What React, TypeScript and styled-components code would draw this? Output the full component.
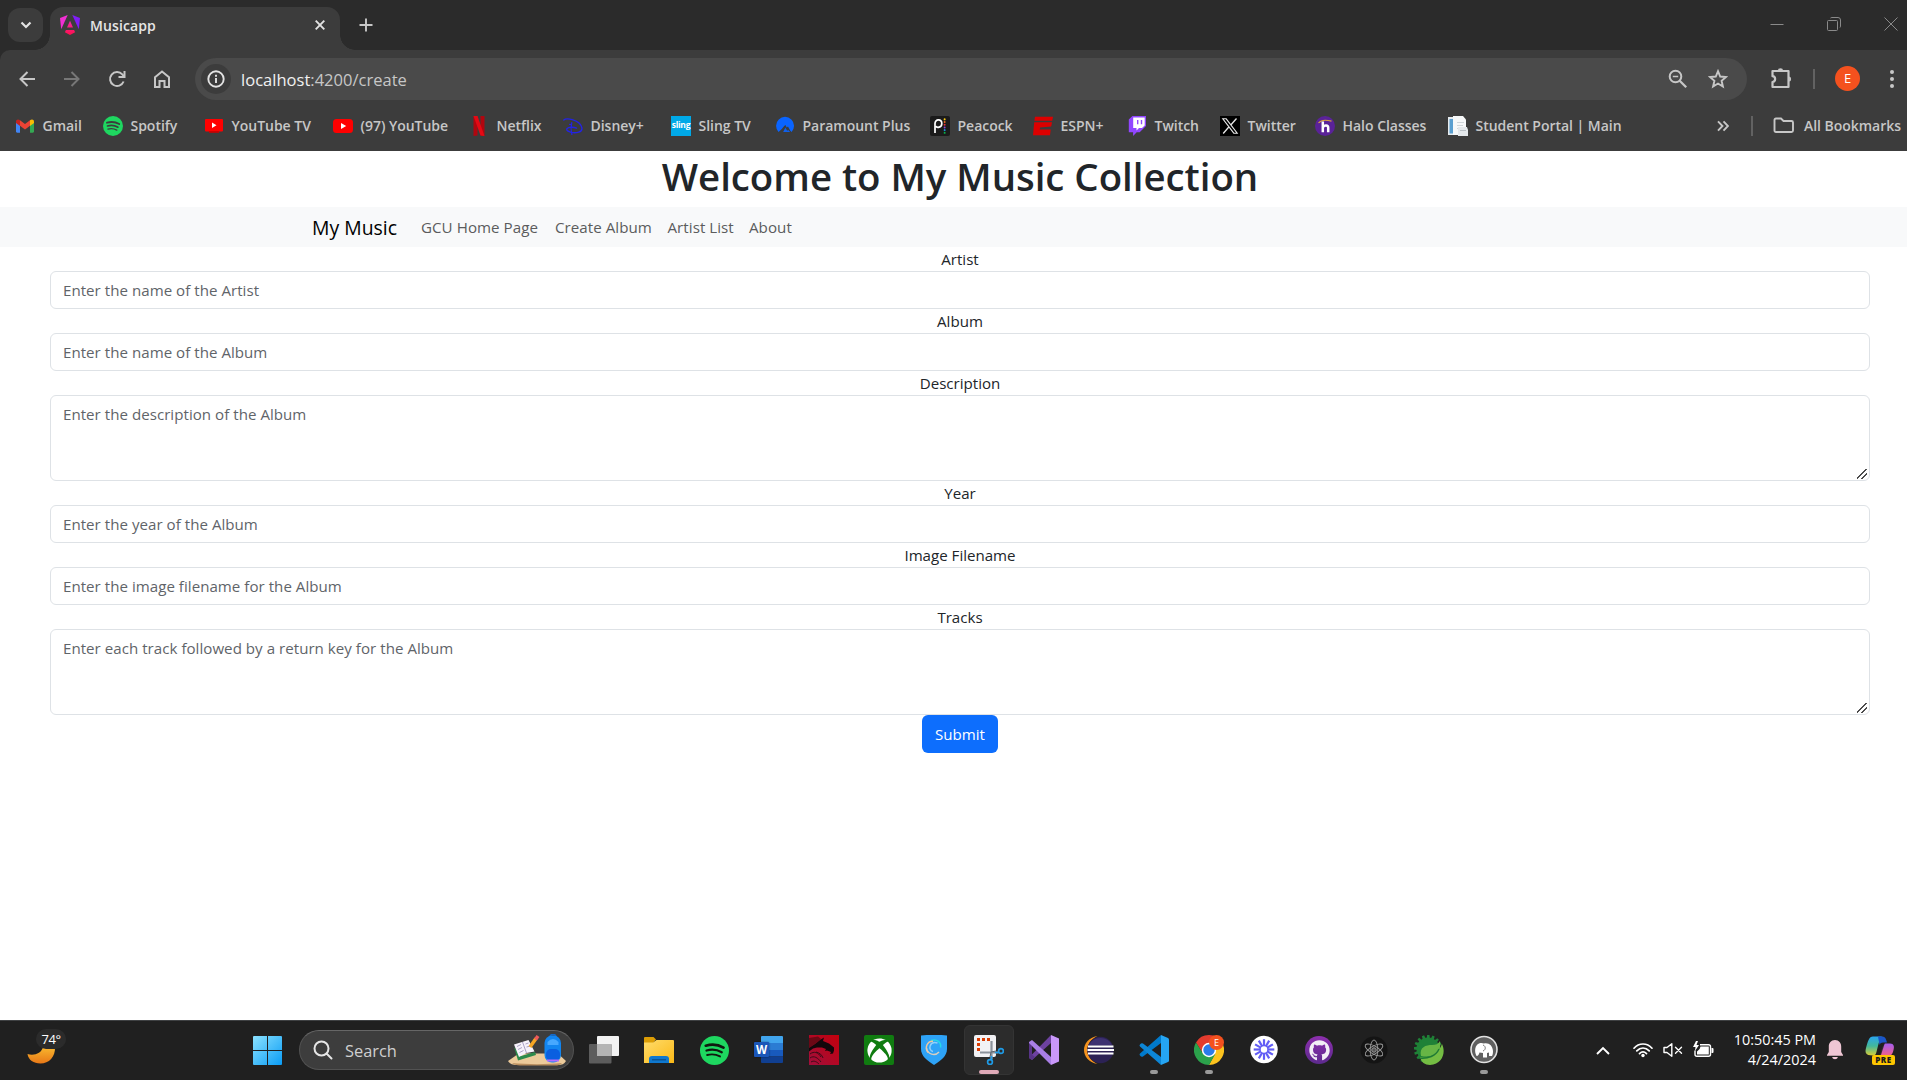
import React from "react";
import styled, { createGlobalStyle } from "styled-components";
import { FaXbox, FaGithub } from "react-icons/fa";

const GlobalStyle = createGlobalStyle`
  * { box-sizing: border-box; }
  body { margin: 0; background: #fff; overflow: hidden; }
  svg { display: block; flex: none; }
`;

const FONT = `"Open Sans", "Noto Sans", sans-serif`;

const Screen = styled.div`
  width: 1907px;
  height: 1080px;
  overflow: hidden;
  display: flex;
  flex-direction: column;
  background: #fff;
  font-family: ${FONT};
`;

/* ---------- Browser chrome ---------- */

const TabStrip = styled.div`
  height: 50px;
  flex: none;
  display: flex;
  align-items: flex-start;
  background: #2b2b2b;
  padding: 7px 0 0 8px;
`;

const TabSearch = styled.div`
  width: 35px;
  height: 34px;
  margin-top: 1px;
  border-radius: 12px;
  background: #3c3c3c;
  display: flex;
  align-items: center;
  justify-content: center;
`;

const Tab = styled.div`
  position: relative;
  width: 290px;
  height: 43px;
  margin-left: 7px;
  padding: 0 15px 7px 10px;
  border-radius: 13px 13px 0 0;
  background: #3c3c3c;
  display: flex;
  align-items: center;
  &::before,
  &::after {
    content: "";
    position: absolute;
    bottom: 0;
    width: 15px;
    height: 15px;
  }
  &::before {
    left: -15px;
    background: radial-gradient(circle at 0 0, transparent 14.5px, #3c3c3c 15px);
  }
  &::after {
    right: -15px;
    background: radial-gradient(circle at 100% 0, transparent 14.5px, #3c3c3c 15px);
  }
`;

const TabTitle = styled.span`
  flex: 1;
  margin-left: 10px;
  padding-top: 1px;
  font-size: 14px;
  font-weight: 600;
  letter-spacing: 0.1px;
  color: #e6e6e6;
`;

const NewTab = styled.div`
  width: 14px;
  margin: 11px 0 0 18.5px;
`;

const WindowControls = styled.div`
  margin-left: auto;
  padding: 10px 9px 0 0;
  display: flex;
  gap: 43px;
`;

const Toolbar = styled.div`
  height: 58px;
  flex: none;
  display: flex;
  align-items: center;
  background: #3c3c3c;
  border-radius: 10px 0 0 0;
  padding-left: 4.5px;
`;

const ToolbarBack = styled.div`
  background: #2b2b2b;
  flex: none;
`;

const NavButton = styled.div`
  width: 45px;
  height: 42px;
  display: flex;
  align-items: center;
  justify-content: center;
`;

const Omnibox = styled.div`
  width: 1552px;
  height: 42px;
  margin-left: 10.5px;
  padding: 0 19px 0 6px;
  border-radius: 21px;
  background: #4a4a4a;
  display: flex;
  align-items: center;
`;

const SiteInfo = styled.div`
  width: 30px;
  height: 30px;
  border-radius: 50%;
  background: #3c3c3c;
  display: flex;
  align-items: center;
  justify-content: center;
`;

const Url = styled.span`
  flex: 1;
  margin-left: 10px;
  font-size: 16.5px;
  letter-spacing: 0.02px;
  color: #c7c7c7;
  b {
    font-weight: 400;
    color: #f1f1f1;
  }
`;

const OmniActions = styled.div`
  display: flex;
  gap: 20px;
`;

const ToolbarRight = styled.div`
  flex: 1;
  display: flex;
  align-items: center;
  padding-left: 23px;
`;

const Divider = styled.div<{ $color: string }>`
  width: 2px;
  height: 20px;
  flex: none;
  background: ${(p) => p.$color};
`;

const ToolbarDivider = styled(Divider)`
  margin-left: 21px;
`;

const Avatar = styled.div`
  width: 25px;
  height: 25px;
  margin: -1px 29px 0 20px;
  border-radius: 50%;
  background: #f4511e;
  color: #fff;
  font-size: 13px;
  line-height: 25px;
  text-align: center;
`;

const Bookmarks = styled.div`
  height: 43px;
  flex: none;
  display: flex;
  align-items: center;
  padding: 0 0 7px 15px;
  background: #3c3c3c;
  color: #c7c7c7;
`;

const Bookmark = styled.div<{ $w: number }>`
  width: ${(p) => p.$w}px;
  flex: none;
  display: flex;
  align-items: center;
  gap: 7.5px;
  font-size: 14px;
  line-height: 20px;
  font-weight: 600;
  letter-spacing: -0.02px;
  white-space: nowrap;
`;

const Overflow = styled.div`
  margin: 0 22px 0 auto;
`;

const AllBookmarks = styled.div`
  display: flex;
  align-items: center;
  gap: 10px;
  width: 134px;
  margin: -1px 0 0 20px;
  font-size: 14px;
  font-weight: 600;
  letter-spacing: -0.03px;
  white-space: nowrap;
`;

/* ---------- Page ---------- */

const Page = styled.main`
  width: 1920px;
  height: 869px;
  flex: none;
  background: #fff;
  color: #212529;
`;

const Heading = styled.h1`
  margin: 0;
  height: 56px;
  padding-top: 1px;
  font-size: 38.4px;
  line-height: 48px;
  font-weight: 570;
  letter-spacing: -0.02px;
  text-align: center;
`;

const Navbar = styled.nav`
  height: 40px;
  padding: 0 312px;
  background: #f8f9fa;
  display: flex;
  align-items: center;
`;

const Brand = styled.a`
  margin-right: 16px;
  width: 85px;
  font-size: 19.4px;
  color: #000;
  white-space: nowrap;
`;

const NavLink = styled.a<{ $w: number }>`
  width: ${(p) => p.$w}px;
  padding: 0 8px;
  font-size: 15.15px;
  line-height: 24px;
  letter-spacing: 0.04px;
  color: #5b5c5d;
  white-space: nowrap;
`;

const Form = styled.form`
  padding: 0 50px;
  display: flex;
  flex-direction: column;
  align-items: center;
`;

const Label = styled.label`
  font-size: 15.1px;
  line-height: 24px;
`;

const fieldStyle = `
  display: block;
  width: 100%;
  margin: 0;
  padding: 6px 12px;
  border: 1px solid #dee2e6;
  border-radius: 6px;
  background: #fff;
  font-family: ${FONT};
  font-size: 15.1px;
  line-height: 24px;
  letter-spacing: 0.03px;
  outline: none;
  &::placeholder { color: #5f6469; opacity: 1; }
`;

const Input = styled.input`
  ${fieldStyle}
  height: 38px;
`;

const TextArea = styled.textarea`
  ${fieldStyle}
  height: 86px;
  resize: vertical;
  &::-webkit-resizer {
    background: linear-gradient(
        135deg,
        transparent 42%,
        #4c4c4c 44%,
        #4c4c4c 52%,
        transparent 54%,
        transparent 67%,
        #4c4c4c 69%,
        #4c4c4c 77%,
        transparent 79%
      )
      3px 4px / 10px 10px no-repeat;
  }
`;

const Submit = styled.button`
  width: 76px;
  height: 38px;
  padding: 0;
  border: 0;
  border-radius: 6px;
  background: #0d6efd;
  color: #fff;
  font-family: ${FONT};
  font-size: 15.1px;
  line-height: 24px;
`;

/* ---------- Taskbar ---------- */

const Taskbar = styled.footer`
  height: 60px;
  flex: none;
  display: flex;
  align-items: center;
  padding-bottom: 1px;
  background: #202020;
  border-top: 1px solid #3f4143;
  color: #fff;
`;

const Weather = styled.div`
  position: relative;
  width: 253px;
  height: 58px;
  padding: 26px 0 0 27px;
`;

const Temperature = styled.span`
  position: absolute;
  left: 36px;
  top: 8px;
  width: 30px;
  height: 20px;
  border-radius: 10px;
  background: #2b2b2b;
  font-size: 13px;
  line-height: 20px;
  letter-spacing: -0.4px;
  text-align: center;
`;

const SearchBox = styled.div`
  width: 275px;
  height: 40px;
  margin-left: 17px;
  padding: 0 7px 0 13px;
  border: 1px solid #525252;
  border-top-color: #666;
  border-radius: 20px;
  background: #3d3d3d;
  display: flex;
  align-items: center;
`;

const SearchText = styled.span`
  flex: 1;
  margin-left: 12px;
  padding-top: 1px;
  font-size: 16.4px;
  line-height: 24px;
  color: #cfcfcf;
`;

const Apps = styled.div`
  margin-left: 5px;
  display: flex;
  gap: 5px;
`;

const AppTile = styled.div<{ $active?: boolean; $dot?: string }>`
  position: relative;
  width: 50px;
  height: 50px;
  border-radius: 6px;
  border: 1px solid ${(p) => (p.$active ? "#343434" : "transparent")};
  background: ${(p) => (p.$active ? "#2c2c2c" : "transparent")};
  display: flex;
  align-items: center;
  justify-content: center;
  &::after {
    content: "";
    display: ${(p) => (p.$dot ? "block" : "none")};
    position: absolute;
    bottom: 0;
    width: ${(p) => (p.$active ? 20 : 8)}px;
    height: 4px;
    border-radius: 2px;
    background: ${(p) => p.$dot};
  }
`;

const Tray = styled.div`
  flex: 1;
  display: flex;
  align-items: center;
  padding-left: 87px;
`;

const TrayStatus = styled.div`
  display: flex;
  align-items: center;
  gap: 10px;
  margin-left: 23px;
`;

const Clock = styled.div`
  width: 102px;
  margin: -1px 11px 0 0;
  display: flex;
  flex-direction: column;
  align-items: flex-end;
  font-size: 14.4px;
  line-height: 20px;
  white-space: nowrap;
`;

/* ---------- Icons ---------- */

type LineProps = { d: string; w: number; h: number; c?: string; s?: number };
const Line = ({ d, w, h, c = "#c7c7c7", s = 2 }: LineProps) => (
  <svg width={w} height={h} viewBox={`0 0 ${w} ${h}`} fill="none" stroke={c} strokeWidth={s}>
    <path d={d} />
  </svg>
);

const AngularIcon = () => (
  <svg width="20" height="20" viewBox="0 0 20 20">
    <defs>
      <linearGradient id="ng2" x1="0" y1="0" x2="0" y2="1">
        <stop offset="0" stopColor="#ee2aa8" />
        <stop offset="1" stopColor="#ff0f4c" />
      </linearGradient>
    </defs>
    <path fill="#f02fd2" d="M7.7 0 0 3.1l1.2 11.2L7.7 0Z" />
    <path fill="#7f1df5" d="M12.3 0 20 3.1l-1.2 11.2L12.3 0Z" />
    <path fill="url(#ng2)" d="M10 5.8 13 12.6H7L10 5.8ZM5.9 15h8.2l1 2.2L10 20l-5.1-2.8 1-2.2Z" />
  </svg>
);

const GmailIcon = () => (
  <svg width="20" height="20" viewBox="0 0 20 20">
    <path fill="#4285f4" d="M1 5.5 5 8.6v8.1H2.2c-.7 0-1.2-.5-1.2-1.2Z" />
    <path fill="#34a853" d="M15 8.6l4-3.1v10c0 .7-.5 1.2-1.2 1.2H15Z" />
    <path fill="#fbbc04" d="M15 4.3c1.8-1.7 4-.8 4 1.3v1.3l-4 3Z" />
    <path fill="#ea4335" d="M5 4.3l5 3.8 5-3.8v5.4l-5 3.8-5-3.8Z" />
    <path fill="#c5221f" d="M1 5.6C1 3.5 3.2 2.6 5 4.3v5.6l-4-3Z" />
  </svg>
);

const SpotifyDisc = ({ size, ink }: { size: number; ink: string }) => (
  <svg width={size} height={size} viewBox="0 0 20 20" fill="none" stroke={ink} strokeLinecap="round">
    <circle cx="10" cy="10" r="10" fill="#1ed760" stroke="none" />
    <path d="M4 6.7c4-1.1 8.500-.8 12.200 1.300" strokeWidth="1.9" />
    <path d="M4.500 10c3.500-1 7.300-.6 10.500 1.200" strokeWidth="1.6" />
    <path d="M4.900 13.100c3-.8 6.200-.5 8.900 1" strokeWidth="1.3" />
  </svg>
);

const YouTubeTvIcon = () => (
  <svg width="20" height="20" viewBox="0 0 20 20">
    <rect x="1" y="3" width="18" height="12.5" rx="1" fill="#f00" />
    <rect x="5" y="15" width="10" height="1.8" fill="#c00" />
    <path fill="#fff" d="M8 6.500v5.400l4.500-2.700Z" />
  </svg>
);

const YouTubeIcon = () => (
  <svg width="20" height="20" viewBox="0 0 20 20">
    <rect x="0" y="3" width="20" height="14" rx="3.5" fill="#f00" />
    <path fill="#fff" d="M8 7v6l5.200-3Z" />
  </svg>
);

const NetflixIcon = () => (
  <svg width="20" height="20" viewBox="0 0 20 20">
    <path fill="#b1060f" d="M4.500 0h4v19.500l-4 .5ZM11.500 0h4v20l-4-.5Z" />
    <path fill="#e50914" d="M4.500 0h4l7 20-4-.5Z" />
  </svg>
);

const DisneyIcon = () => (
  <svg width="20" height="20" viewBox="0 0 20 20" fill="none" stroke="#2323e6" strokeLinecap="round">
    <path d="M.8 4C3 1.800 17 3 18.900 12c.6 4-5.500 5.600-10.500 4.400-3-.8-5.400-2-4.400-3.700 1.400-2 7-1.700 9.500-.6" strokeWidth="1.4" />
    <path d="M8.800 6.500c-.8 3-.7 9 .1 12M6.500 8.300l2 .4" strokeWidth="1.2" />
  </svg>
);

const SlingLogo = styled.span`
  width: 20px;
  height: 20px;
  background: #00a9e8;
  color: #fff;
  font-size: 8.5px;
  font-weight: 700;
  line-height: 18px;
  letter-spacing: -0.3px;
  text-align: center;
`;

const ParamountIcon = () => (
  <svg width="20" height="20" viewBox="0 0 20 20">
    <path fill="#0a64ff" d="M3.500 16A9 9 0 1 1 16.600 16l-1.300-1.300-2.300-4.200-1.300 1L10.500 9 9.200 10 6.800 13Z" />
    <path fill="#0a64ff" d="M10.300 11.500 8.200 16h7l-2-2-1 .7Z" opacity=".9" />
  </svg>
);

const PeacockIcon = () => (
  <svg width="20" height="20" viewBox="0 0 20 20">
    <rect width="20" height="20" rx="2" fill="#1b1b1b" />
    <path d="M5 17V7.500C5 2.500 11.800 3 11.800 7.500S6.500 12 6 10" fill="none" stroke="#fff" strokeWidth="1.7" />
    {["#fccc12", "#f26b21", "#e8303a", "#8b46d8", "#1a8bd8", "#08b14b"].map((c, i) => (
      <rect key={c} x="13.7" y={2.3 + i * 2.7} width="1.9" height="2" rx=".9" fill={c} />
    ))}
  </svg>
);

const EspnIcon = () => (
  <svg width="20" height="20" viewBox="0 0 20 20">
    <path fill="#d00" d="M2 .8h18l-.8 4H1.400ZM1.200 6.200H19l-.8 4.400-11.100.8-.4 2.100H17.700L17 19.200H0Z" />
  </svg>
);

const TwitchIcon = () => (
  <svg width="20" height="20" viewBox="0 0 20 20">
    <path fill="#9146ff" d="M5.400 0 1.800 3.600v12.600h4.300V20l3.600-3.700h3L19 10V0Z" />
    <path fill="#fff" d="M6.200 1.400h11.500v8L15 12h-3l-2.500 2.400V12H6.200Z" />
    <path fill="#9146ff" d="M10 4h1.400v4.200H10ZM13.800 4h1.400v4.200h-1.400Z" />
  </svg>
);

const XIcon = () => (
  <svg width="20" height="20" viewBox="0 0 20 20">
    <rect width="20" height="20" fill="#000" />
    <path d="M2.800 2.800h3.400l11 14.400h-3.400Z" fill="none" stroke="#e8e8e8" strokeWidth="1.1" />
    <path d="M16.500 2.500 11 8.800M8.800 11 3.200 17.500" stroke="#e8e8e8" strokeWidth="1.3" />
  </svg>
);

const HaloIcon = () => (
  <svg width="20" height="20" viewBox="0 0 20 20" fill="none">
    <circle cx="10" cy="10" r="10" fill="#5a2299" />
    <path d="M3.500 7C6 3.800 12 4 16.500 5.200" stroke="#d9a441" strokeWidth="1.2" />
    <path d="M7.800 5.500v10.700M8 11c1.500-2.200 5.200-2 5.200.6v4.600" stroke="#fff" strokeWidth="2.5" />
  </svg>
);

const PortalIcon = () => (
  <svg width="20" height="20" viewBox="0 0 20 20">
    <path fill="#e6ebee" d="M0 1h6v18H0Z" />
    <path fill="#5a9fd0" d="M1.500 3h3.500v14.500H1.500Z" />
    <path fill="#f6f8f9" d="M5 0h10l3 3.500V19H5Z" />
    <path fill="#cfd5d9" d="M9 6h7v1H9ZM9 9h6v1H9ZM9 12h3v1H9Z" />
    <path fill="#e4e8eb" d="M10 11h9l1 3v6H10Z" />
    <path fill="#b9c0c5" d="M12 14h6v1h-6Z" />
  </svg>
);

const SiteInfoIcon = () => (
  <svg width="18" height="18" viewBox="0 0 18 18" fill="none" stroke="#e3e3e3">
    <circle cx="9" cy="9" r="7.7" strokeWidth="1.9" />
    <path d="M9 8v5M9 4.800v1.900" strokeWidth="1.9" />
  </svg>
);

const ReloadIcon = () => (
  <svg width="18" height="18" viewBox="0 0 18 18" fill="none" stroke="#c7c7c7" strokeWidth="2">
    <path d="M15.600 11.500A7 7 0 1 1 14.300 4.300L16 6.300" />
    <path d="M16.500 1v6h-6" />
  </svg>
);

const PuzzleIcon = () => (
  <svg width="22" height="22" viewBox="0 0 22 22" fill="none" stroke="#c7c7c7" strokeWidth="2.2" strokeLinejoin="round">
    <path d="M2.500 3h16v16h-16v-5c3.500-.3 3.500-5.500 0-5.800Z" />
    <path d="M8 2.300a2.500 2 0 0 1 5 0ZM19.100 8.500a2 2.500 0 0 1 0 5Z" fill="#c7c7c7" stroke="none" />
  </svg>
);

const MoonIcon = () => (
  <svg width="29" height="20" viewBox="0 0 29 20">
    <defs>
      <linearGradient id="moon" x1="0" y1="0" x2="0" y2="1">
        <stop offset="0" stopColor="#f8b72e" />
        <stop offset="1" stopColor="#e87817" />
      </linearGradient>
    </defs>
    <path fill="url(#moon)" d="M.5 7C7 9 14.500 6.500 16 0L28 0C28.500 10 22 16.500 13.500 16.500 6.500 16.500 1.500 13 .5 7Z" />
  </svg>
);

const WindowsIcon = () => (
  <svg width="29" height="29" viewBox="0 0 29 29">
    <defs>
      <linearGradient id="win" x1="0" y1="0" x2="29" y2="29" gradientUnits="userSpaceOnUse">
        <stop offset="0" stopColor="#8be2ff" />
        <stop offset="1" stopColor="#0a9cf5" />
      </linearGradient>
    </defs>
    <path fill="url(#win)" d="M1 0h13v14H0V1Q0 0 1 0ZM15 0h13q1 0 1 1v13H15ZM0 15h14v14H1q-1 0-1-1ZM15 15h14v13q0 1-1 1H15Z" />
  </svg>
);

const SearchArt = () => (
  <svg width="58" height="32" viewBox="0 0 58 32">
    <path fill="#ecca9a" d="M0 27 8 21.500l4-2h36l4 2 6 5.500c-2 3-4 4-8 4H9c-4 0-7-1-9-4Z" />
    <path fill="#b98e5e" d="M4 29c14 1.500 36 1.500 50 0-2 2-4 2.500-7 2.500H12c-3 0-6-1-8-2.500Z" />
    <path fill="#2c8a4b" d="m6 13 4 13.500 18-5.500-1-3-14 4Z" />
    <path fill="#f6f2fb" d="m6 10.500 8-2.500 6.500-2 6 11.500-8 1.500-7.500 4Z" />
    <path stroke="#aaa0c4" fill="none" d="m14.500 8 4 11M9 12.500l4-2M10 15.500l4-2M17.500 10l3-1M18.500 13l4-1M11.500 18.500l4-2" />
    <path stroke="#f6a623" strokeWidth="3.5" d="m22 13 6-8.500" />
    <path stroke="#ef5a5a" strokeWidth="3.5" d="m27.500 5.500 2.500-3.500" />
    <path fill="none" stroke="#1467c8" strokeWidth="1.5" d="M42 3c0-3.500 6-3.500 6 0" />
    <rect x="36.500" y="1.500" width="16.5" height="27" rx="7.500" fill="#1285f0" />
    <path fill="#47a8ff" d="M39.500 8q5.500-6 11 0v3h-11Z" />
    <rect x="38" y="15" width="14" height="12" rx="5" fill="#0a5fe0" />
    <path stroke="#b56cff" strokeWidth="2" d="M39 26.500h12" />
  </svg>
);

const TaskViewIcon = () => (
  <svg width="30" height="30" viewBox="0 0 30 30">
    <rect x="8" y="1" width="22" height="20" rx="1" fill="#f2f2f2" />
    <rect x="0" y="9" width="22.5" height="19.5" rx="1" fill="#5d5d5d" />
    <path fill="#b4b4b4" d="M8 9h14.500v12H8Z" />
  </svg>
);

const ExplorerIcon = () => (
  <svg width="30" height="30" viewBox="0 0 30 30">
    <defs>
      <linearGradient id="fold" x1="0" y1="0" x2="1" y2="1">
        <stop offset="0" stopColor="#ffdc6b" />
        <stop offset="1" stopColor="#fbb917" />
      </linearGradient>
    </defs>
    <path fill="#dc9d05" d="M0 3q0-1 1-1h8.500L12 4.500 9 8H0Z" />
    <path fill="url(#fold)" d="M0 7.500h9L12.500 5H29q1 0 1 1v22H0Z" />
    <path fill="#0f78cf" d="M5 28v-4q0-3 3-3h14q3 0 3 3v4Z" />
    <path stroke="#0a4b86" strokeWidth="1.2" d="M8 24.800h14" />
  </svg>
);

const WordTile = styled.span`
  position: absolute;
  left: 9px;
  top: 16px;
  width: 15px;
  height: 15px;
  border-radius: 1px;
  background: #1b56b8;
  box-shadow: 0 0 2px rgba(0, 0, 0, 0.5);
  color: #fff;
  font-size: 11.5px;
  font-weight: 700;
  line-height: 15px;
  text-align: center;
`;

const WordIcon = () => (
  <svg width="30" height="30" viewBox="0 0 30 30">
    <path fill="#41a5ee" d="M8 1h20q1 0 1 1v6H7V2q0-1 1-1Z" />
    <path fill="#2b7cd3" d="M7 8h22v7H7Z" />
    <path fill="#185abd" d="M7 15h22v6.500H7Z" />
    <path fill="#103f91" d="M7 21.500h22V27q0 1-1 1H8q-1 0-1-1Z" />
  </svg>
);

const DragonIcon = () => (
  <svg width="30" height="30" viewBox="0 0 30 30">
    <defs>
      <linearGradient id="drg" x1="0" y1="1" x2="1" y2="0">
        <stop offset="0" stopColor="#a00f3c" />
        <stop offset="1" stopColor="#c4000c" />
      </linearGradient>
    </defs>
    <rect width="30" height="30" fill="url(#drg)" />
    <path fill="#5a0912" d="M0 3 9 1.500 12 4 7 8 0 13Z" opacity=".8" />
    <path fill="#14070b" d="M0 13 6 9l5-4 4-2.500-1 3.500 6 2.500 5 4v3l-1 3-3 .500 1-2-4-1.500-2 .5 1-2-4-1.500-5 0-4 1-4 3Z" />
    <path fill="none" stroke="#3c0b18" strokeWidth="1" d="M1 19c4-3 8-2 11 3M1 23c4-3 8 0 11 4M2 27c3-2 6 0 8 2M7 17c4 1 6 3 7 6" />
  </svg>
);

const XboxTile = styled.span`
  width: 30px;
  height: 30px;
  border-radius: 2px;
  background: #107c10;
  color: #fff;
  display: flex;
  align-items: center;
  justify-content: center;
`;

const ShieldIcon = () => (
  <svg width="30" height="30" viewBox="0 0 30 30">
    <path fill="#2ea3f7" d="M2 .5q13-1.500 26 0V14c0 7-6 11.500-13 16C8 25.500 2 21 2 14Z" />
    <g fill="none" strokeWidth="1.5">
      <path stroke="#8fd0fb" d="M18.500 8c-8-2.500-10 7-4.500 8.500" />
      <path stroke="#25dbe8" d="M12 5.500c6-2 10.500 2 9.500 7" />
      <path stroke="#f0c79f" d="M9 17.500C5.500 13 8 6 14 6.200" />
      <path stroke="#d9cfc0" d="M7.500 13c1 6.500 8.500 8.500 12.500 4" />
    </g>
  </svg>
);

const SnipIcon = () => (
  <svg width="30" height="30" viewBox="0 0 30 30">
    <rect width="22" height="22" rx="2" fill="#f1f1f4" />
    <path fill="none" stroke="#d83b01" strokeWidth="3" strokeDasharray="3 2" d="M16 4.500H3" />
    <path fill="none" stroke="#d83b01" strokeWidth="3" strokeDasharray="3 2" d="M4.500 8v9" />
    <path fill="none" stroke="#8b929b" strokeWidth="2.2" d="M6 17.500h18M17.500 6v18" />
    <path fill="none" stroke="#5d6670" strokeWidth="1" d="M17 17l5-1M17 17l-1 5" />
    <circle cx="27" cy="16" r="2.4" fill="none" stroke="#1f9be6" strokeWidth="1.7" />
    <circle cx="16" cy="27" r="2.4" fill="none" stroke="#1f9be6" strokeWidth="1.7" />
    <path stroke="#1f9be6" strokeWidth="1.7" d="M21 17.500h4M17.500 21v4" />
  </svg>
);

const VisualStudioIcon = () => (
  <svg width="30" height="30" viewBox="0 0 30 30">
    <path fill="#6d42a0" d="M3 25 22 8V0L0 22.500V23Z" />
    <path fill="#583487" d="M0 7v16l3 2 3-3-3-2.500v-9Z" />
    <path fill="#a97fe6" d="M3 5 22 22v8L0 8V7Z" />
    <path fill="#c997fa" d="m22 0 8 3.500v23L22 30Z" />
  </svg>
);

const EclipseIcon = () => (
  <svg width="30" height="30" viewBox="0 0 30 30">
    <path fill="#f7941e" d="M13.500 1C-4.500 4-4.500 26 13.500 29 0 23 0 7 13.500 1Z" />
    <circle cx="16.500" cy="15" r="13.2" fill="#2c2255" />
    <path fill="#4a3c83" d="M5 10a13 13 0 0 1 23 0Z" opacity=".6" />
    <path stroke="#fff" strokeWidth="1.9" d="M4 11.500h25.500M3.500 15h26.500M4 18.500h25.500" />
  </svg>
);

const VsCodeIcon = () => (
  <svg width="30" height="30" viewBox="0 0 30 30">
    <path fill="#007acc" d="M1 20.500Q2.500 22.500 4 21.500L22 8V0L1 18.500Q0 19.500 1 20.500Z" />
    <path fill="#0d86d6" d="M1 9.500Q2.500 7.500 4 8.500L22 22v8L1 11.500Q0 10.500 1 9.500Z" />
    <path fill="#25a5f3" d="m22 0 7 3q1 .5 1 1.500v21q0 1-1 1.500l-7 3Z" />
  </svg>
);

const ChromeIcon = () => (
  <svg width="30" height="30" viewBox="0 0 30 30">
    <path fill="#e33b2e" d="M2 7.500 8.900 18.500 15 8h13.200A15 15 0 0 0 2 7.500Z" />
    <path fill="#fcc31e" d="M28 7.500A15 15 0 0 1 15 30l6.200-11.500L15 8h13.200Z" />
    <path fill="#2ba14b" d="M2 7.500A15 15 0 0 0 15 30l6.300-11-6.300 3-6-3.500Z" />
    <circle cx="15" cy="15" r="7.2" fill="#fff" />
    <circle cx="15" cy="15" r="5.7" fill="#2b7bea" />
  </svg>
);

const ChromeBadge = styled.span`
  position: absolute;
  left: 24px;
  top: 9px;
  width: 15px;
  height: 15px;
  border-radius: 50%;
  background: #f4511e;
  color: #fff;
  font-size: 9px;
  line-height: 15px;
  text-align: center;
`;

const LoomIcon = () => (
  <svg width="30" height="30" viewBox="0 0 30 30">
    <circle cx="15" cy="14.5" r="13.7" fill="#fff" />
    {Array.from({ length: 12 }, (_, i) => (
      <path key={i} stroke="#625df5" strokeWidth="2.2" d="M15 4.200v6.500" transform={`rotate(${i * 30} 15 14.500)`} />
    ))}
    <circle cx="15" cy="14.5" r="4" fill="none" stroke="#625df5" strokeWidth="1.5" />
  </svg>
);

const GithubTile = styled.span`
  width: 28px;
  height: 28px;
  border-radius: 50%;
  background: linear-gradient(#8d2fae, #5c2a8d);
  color: #f2eef6;
  display: flex;
  align-items: center;
  justify-content: center;
`;

const AtomIcon = () => (
  <svg width="30" height="30" viewBox="0 0 30 30" fill="none" stroke="#a0a0a0" strokeWidth=".9">
    <circle cx="15" cy="15" r="13.5" fill="#141414" stroke="none" />
    {[0, 60, 120].map((a) => (
      <ellipse key={a} cx="15" cy="15" rx="3.8" ry="10" transform={`rotate(${a} 15 15)`} />
    ))}
    <circle cx="15" cy="15" r="2.3" fill="#555" />
  </svg>
);

const SpringIcon = () => (
  <svg width="30" height="30" viewBox="0 0 30 30">
    <circle cx="14" cy="14" r="11.5" fill="#1f8137" />
    {Array.from({ length: 13 }, (_, i) => (
      <path key={i} fill="#1f8137" d="M12.500 3.500 12.900-.2h2.300l.4 3.700Z" transform={`rotate(${i * 22 - 175} 14 14)`} />
    ))}
    <path fill="#74bd43" d="M6 22c9 2 18-2 22-13 4 8 1 20-12 21-5 0-9-3-10-8Z" />
    <path fill="#67b545" d="M7 21C5 12 12 10 18 10c4 0 6-1 8-4 2 9-4 18-19 15Z" />
    <path fill="none" stroke="#1f7a35" strokeWidth="1.4" d="M5 23c9 1 17-2 20-9" />
  </svg>
);

const ElephantIcon = () => (
  <svg width="30" height="30" viewBox="0 0 30 30">
    <circle cx="15" cy="14.5" r="13" fill="#606060" stroke="#e2e2e2" strokeWidth="1.6" />
    <path fill="#fff" d="M7.500 21C5 16 6 10 10 8.500c2-.7 3.500-.4 5 0 5-1 8.500 2 9 7.500 0 2-.3 4-1 5h-3v-3.500l-2 .5V22.500h-4V18l-3.500-.5C10 19 9.500 21 7.500 21Z" />
    <path fill="none" stroke="#606060" strokeWidth=".8" d="M14 10c3 1 3 5 0 6" />
  </svg>
);

const WifiIcon = () => (
  <svg width="20" height="16" viewBox="0 0 20 16" fill="none" stroke="#fff" strokeWidth="1.7" strokeLinecap="round">
    <path d="M1 6.200c5-5.600 13-5.600 18 0M3.800 8.900c3.600-3.900 8.800-3.900 12.400 0M6.500 11.600c2.200-2.200 4.800-2.200 7 0" />
    <circle cx="10" cy="13.500" r="1.7" fill="#fff" stroke="none" />
  </svg>
);

const MuteIcon = () => (
  <svg width="20" height="16" viewBox="0 0 20 16" fill="none" stroke="#fff" strokeWidth="1.4" strokeLinejoin="round" strokeLinecap="round">
    <path d="M1 5.500h3L8.800 1.700v12.600L4 10.500H1ZM12.500 5.200l6 6M18.500 5.200l-6 6" />
  </svg>
);

const BatteryIcon = () => (
  <svg width="21" height="18" viewBox="0 0 21 18">
    <path fill="none" stroke="#fff" strokeWidth="1.4" d="M7 3.700h8.500q2 0 2 2v7.600q0 2-2 2H4q-2 0-2-2V9.500" />
    <path fill="#fff" d="M7.500 5.500h8.300v8H4V10.500Q7.500 8 7.500 5.500ZM18.500 7h1q1 0 1 1v3q0 1-1 1h-1ZM3 0 0 6h2.500L2 10l4-6H3.500L5 0Z" />
  </svg>
);

const BellIcon = () => (
  <svg width="16" height="20" viewBox="0 0 16 20">
    <path fill="#efc6d4" d="M8 0c4 0 6.200 3 6.200 6.500V12L16 15v.8H0V15l1.800-3V6.500C1.800 3 4 0 8 0ZM5.200 17h5.600c-.4 3-5.200 3-5.600 0Z" />
  </svg>
);

const CopilotIcon = () => (
  <svg width="30" height="30" viewBox="0 0 30 30">
    <defs>
      <linearGradient id="cp1" x1="0" y1="0" x2="0" y2="1">
        <stop offset="0" stopColor="#2aa6f0" />
        <stop offset=".5" stopColor="#42b89c" />
        <stop offset="1" stopColor="#d8cc36" />
      </linearGradient>
      <linearGradient id="cp2" x1="0" y1="0" x2="0" y2="1">
        <stop offset="0" stopColor="#a45df0" />
        <stop offset="1" stopColor="#f0608a" />
      </linearGradient>
    </defs>
    <path fill="url(#cp1)" d="M8 .5h9c-3 2-4 11-6 17-.5 1.500-2 2-3 2C0 19.500 0 16 1 12 3 5 4 .5 8 .5Z" />
    <path fill="#1a56c8" d="M13 .5h4c3 0 4 2 5 6h-4c-2 0-3 1-3.500 2.500Z" />
    <path fill="url(#cp2)" d="M20 7.500h5c4 0 4.500 3 3.500 6.500-1 4-2 5.500-4 5.500H15c1-2 2-10 5-12Z" />
    <path fill="#202020" d="M17 8h2.500l-3.500 11h-4Z" opacity=".85" />
  </svg>
);

const CopilotWrap = styled.div`
  position: relative;
  margin: 1px 0 0 22px;
`;

const PreBadge = styled.span`
  position: absolute;
  left: 7px;
  top: 19px;
  width: 23px;
  height: 10px;
  border-radius: 2px;
  background: #fdc500;
  color: #1a1a1a;
  font-size: 8px;
  font-weight: 800;
  line-height: 10px;
  letter-spacing: 0.5px;
  text-align: center;
`;

/* ---------- Data ---------- */

const bookmarks: { name: string; w: number; icon: React.ReactNode }[] = [
  { name: "Gmail", w: 88, icon: <GmailIcon /> },
  { name: "Spotify", w: 101, icon: <SpotifyDisc size={20} ink="#3c3c3c" /> },
  { name: "YouTube TV", w: 129, icon: <YouTubeTvIcon /> },
  { name: "(97) YouTube", w: 136, icon: <YouTubeIcon /> },
  { name: "Netflix", w: 94, icon: <NetflixIcon /> },
  { name: "Disney+", w: 108, icon: <DisneyIcon /> },
  { name: "Sling TV", w: 104, icon: <SlingLogo>sling</SlingLogo> },
  { name: "Paramount Plus", w: 155, icon: <ParamountIcon /> },
  { name: "Peacock", w: 103, icon: <PeacockIcon /> },
  { name: "ESPN+", w: 94, icon: <EspnIcon /> },
  { name: "Twitch", w: 93, icon: <TwitchIcon /> },
  { name: "Twitter", w: 95, icon: <XIcon /> },
  { name: "Halo Classes", w: 133, icon: <HaloIcon /> },
  { name: "Student Portal | Main", w: 180, icon: <PortalIcon /> },
];

const links = [
  { name: "GCU Home Page", w: 134 },
  { name: "Create Album", w: 112.5 },
  { name: "Artist List", w: 81.5 },
  { name: "About", w: 60 },
];

const fields = [
  { label: "Artist", hint: "Enter the name of the Artist" },
  { label: "Album", hint: "Enter the name of the Album" },
  { label: "Description", hint: "Enter the description of the Album", long: true },
  { label: "Year", hint: "Enter the year of the Album" },
  { label: "Image Filename", hint: "Enter the image filename for the Album" },
  { label: "Tracks", hint: "Enter each track followed by a return key for the Album", long: true },
];

const apps: { icon: React.ReactNode; active?: boolean; dot?: string }[] = [
  { icon: <TaskViewIcon /> },
  { icon: <ExplorerIcon /> },
  { icon: <SpotifyDisc size={29} ink="#10190f" /> },
  { icon: <><WordIcon /><WordTile>W</WordTile></> },
  { icon: <DragonIcon /> },
  { icon: <XboxTile><FaXbox size={25} /></XboxTile> },
  { icon: <ShieldIcon /> },
  { icon: <SnipIcon />, active: true, dot: "#dfaab8" },
  { icon: <VisualStudioIcon /> },
  { icon: <EclipseIcon /> },
  { icon: <VsCodeIcon />, dot: "#9a9a9a" },
  { icon: <><ChromeIcon /><ChromeBadge>E</ChromeBadge></>, dot: "#9a9a9a" },
  { icon: <LoomIcon /> },
  { icon: <GithubTile><FaGithub size={21} /></GithubTile> },
  { icon: <AtomIcon /> },
  { icon: <SpringIcon /> },
  { icon: <ElephantIcon />, dot: "#9a9a9a" },
];

export default function App() {
  return (
    <Screen>
      <GlobalStyle />
      <TabStrip>
        <TabSearch>
          <Line w={12} h={8} d="M1.500 1.500 6 6l4.500-4.500" c="#e3e3e3" s={2.2} />
        </TabSearch>
        <Tab>
          <AngularIcon />
          <TabTitle>Musicapp</TabTitle>
          <Line w={10} h={10} d="M.7.7 9.300 9.300M9.300.7.7 9.300" c="#e3e3e3" s={1.9} />
        </Tab>
        <NewTab>
          <Line w={14} h={14} d="M7 .5v13M.5 7h13" c="#c7c7c7" s={1.9} />
        </NewTab>
        <WindowControls>
          <Line w={14} h={14} d="M.5 7.500h13" c="#8a8a8a" s={1} />
          <Line w={14} h={14} d="M.5 4.500q0-1 1-1h8q1 0 1 1v8q0 1-1 1h-8q-1 0-1-1ZM3.500 1Q4 .5 5 .5h6q2.500 0 2.500 2.500v6q0 1-.5 1.500" c="#8a8a8a" s={1} />
          <Line w={14} h={14} d="M.5.5l13 13M13.500.5l-13 13" c="#8a8a8a" s={1} />
        </WindowControls>
      </TabStrip>
      <ToolbarBack>
        <Toolbar>
          <NavButton><Line w={16} h={16} d="M16 8H1.500M8.500 1 1.500 8l7 7" /></NavButton>
          <NavButton><Line w={16} h={16} d="M0 8h14.500M7.500 1l7 7-7 7" c="#777" /></NavButton>
          <NavButton><ReloadIcon /></NavButton>
          <NavButton><Line w={18} h={18} d="M2 7.300 9 1.500l7 5.800V17h-4.500v-6h-5v6H2Z" /></NavButton>
          <Omnibox>
            <SiteInfo><SiteInfoIcon /></SiteInfo>
            <Url><b>localhost</b>:4200/create</Url>
            <OmniActions>
              <svg width="20" height="20" viewBox="0 0 20 20" fill="none" stroke="#c7c7c7">
                <circle cx="7.500" cy="7.500" r="5.8" strokeWidth="2" />
                <path d="m11.700 11.700 6.500 6.500" strokeWidth="2.3" />
                <path d="M4.800 7.500h5.400" strokeWidth="1.5" />
              </svg>
              <Line w={20} h={20} d="M10 2.200l2.200 5.300 5.800.5-4.400 3.800 1.300 5.700-4.900-3-4.900 3 1.300-5.700L2 8l5.800-.5Z" s={1.9} />
            </OmniActions>
          </Omnibox>
          <ToolbarRight>
            <PuzzleIcon />
            <ToolbarDivider $color="#626262" />
            <Avatar>E</Avatar>
            <svg width="6" height="20" viewBox="0 0 6 20" fill="#c7c7c7">
              <circle cx="3" cy="3" r="2" /><circle cx="3" cy="10" r="2" /><circle cx="3" cy="17" r="2" />
            </svg>
          </ToolbarRight>
        </Toolbar>
      </ToolbarBack>
      <Bookmarks>
        {bookmarks.map((b) => (
          <Bookmark key={b.name} $w={b.w}>{b.icon}{b.name}</Bookmark>
        ))}
        <Overflow>
          <Line w={12} h={12} d="M1 1.300 5.500 6 1 10.700M6.500 1.300 11 6l-4.500 4.700" s={1.9} />
        </Overflow>
        <Divider $color="#626262" />
        <AllBookmarks>
          <Line w={21} h={17} d="M1.500 3q0-1.500 1.500-1.500h5l2.500 2.500h8q1.500 0 1.500 1.500v8q0 1.500-1.500 1.500H3q-1.500 0-1.500-1.500Z" s={1.9} />
          All Bookmarks
        </AllBookmarks>
      </Bookmarks>

      <Page>
        <Heading>Welcome to My Music Collection</Heading>
        <Navbar>
          <Brand>My Music</Brand>
          {links.map((l) => (
            <NavLink key={l.name} $w={l.w}>{l.name}</NavLink>
          ))}
        </Navbar>
        <Form onSubmit={(e) => e.preventDefault()}>
          {fields.map((f) => (
            <React.Fragment key={f.label}>
              <Label>{f.label}</Label>
              {f.long ? <TextArea placeholder={f.hint} /> : <Input placeholder={f.hint} />}
            </React.Fragment>
          ))}
          <Submit>Submit</Submit>
        </Form>
      </Page>

      <Taskbar>
        <Weather>
          <MoonIcon />
          <Temperature>74°</Temperature>
        </Weather>
        <WindowsIcon />
        <SearchBox>
          <svg width="20" height="20" viewBox="0 0 20 20" fill="none" stroke="#e6e6e6" strokeWidth="2" strokeLinecap="round">
            <circle cx="8.500" cy="8.500" r="7" />
            <path d="m13.500 13.500 5 5" />
          </svg>
          <SearchText>Search</SearchText>
          <SearchArt />
        </SearchBox>
        <Apps>
          {apps.map((a, i) => (
            <AppTile key={i} $active={a.active} $dot={a.dot}>{a.icon}</AppTile>
          ))}
        </Apps>
        <Tray>
          <Line w={14} h={9} d="M1 8l6-6 6 6" c="#fff" s={1.9} />
          <TrayStatus><WifiIcon /><MuteIcon /><BatteryIcon /></TrayStatus>
          <Clock><span>10:50:45 PM</span><span>4/24/2024</span></Clock>
          <BellIcon />
          <CopilotWrap><CopilotIcon /><PreBadge>PRE</PreBadge></CopilotWrap>
        </Tray>
      </Taskbar>
    </Screen>
  );
}
